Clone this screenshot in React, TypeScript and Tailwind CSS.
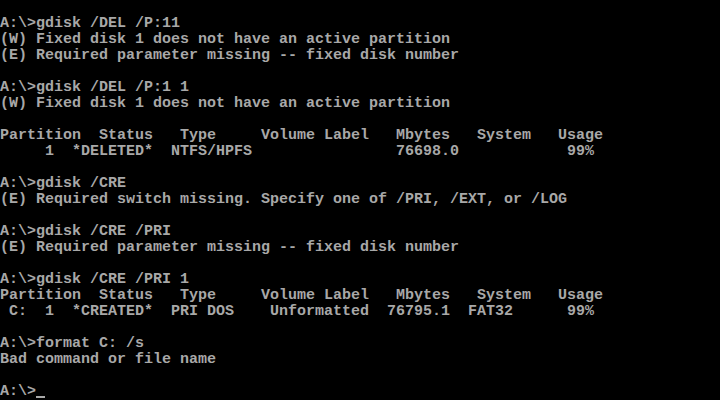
const lines: string[] = [
  "",
  "A:\\>gdisk /DEL /P:11",
  "(W) Fixed disk 1 does not have an active partition",
  "(E) Required parameter missing -- fixed disk number",
  "",
  "A:\\>gdisk /DEL /P:1 1",
  "(W) Fixed disk 1 does not have an active partition",
  "",
  "Partition  Status   Type     Volume Label   Mbytes   System   Usage",
  "     1  *DELETED*  NTFS/HPFS                76698.0            99%",
  "",
  "A:\\>gdisk /CRE",
  "(E) Required switch missing. Specify one of /PRI, /EXT, or /LOG",
  "",
  "A:\\>gdisk /CRE /PRI",
  "(E) Required parameter missing -- fixed disk number",
  "",
  "A:\\>gdisk /CRE /PRI 1",
  "Partition  Status   Type     Volume Label   Mbytes   System   Usage",
  " C:  1  *CREATED*  PRI DOS    Unformatted  76795.1  FAT32      99%",
  "",
  "A:\\>format C: /s",
  "Bad command or file name",
  "",
];

export default function App() {
  return (
    <div className="h-[400px] w-[720px] overflow-hidden bg-black font-['Liberation_Mono',monospace] text-[15px] font-bold leading-[16px] text-[#a8a8a8]">
      {lines.map((line, i) => (
        <div key={i} className="h-4 whitespace-pre">
          {line}
        </div>
      ))}
      <div className="flex h-4 whitespace-pre">
        <span>A:\&gt;</span>
        <span className="mt-[12px] h-[2px] w-[9px] bg-[#a8a8a8]" />
      </div>
    </div>
  );
}
